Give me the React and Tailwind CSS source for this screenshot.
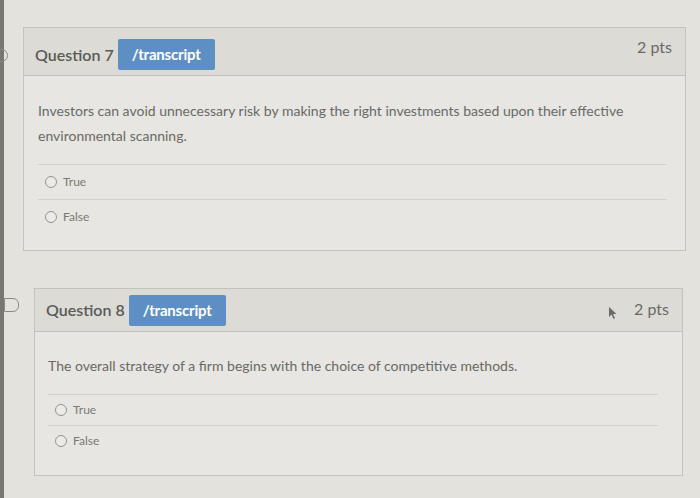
import React from "react";

// a single true/false option with a hollow radio
const Option = ({ label, rowH }) => (
  <div className={`flex items-center gap-[6px] border-t border-[#d2d1cc] ${rowH}`}>
    <span className="w-[12px] h-[12px] rounded-full border border-[#959490] bg-[#ecebe7] ml-[7px]" />
    <span className="text-[12px] text-[#7a7975]">{label}</span>
  </div>
);

const Badge = () => (
  <span className="ml-[4px] inline-flex items-center h-[31px] px-[14px] rounded-[2px] bg-[#5e8fc4] text-white font-bold text-[15px] tracking-[-0.2px]">
    /transcript
  </span>
);

const QuestionCard = ({ number, text, lines, rowH, className, headerH, ptsPos, bodyPad, cursor }) => (
  <div className={`border border-[#c3c2bd] bg-[#e7e6e2] ${className}`}>
    {/* header */}
    <div
      className={`flex items-center justify-between bg-[#dcdbd6] border-b border-[#c3c2bd] pl-[11px] pr-[13px] ${headerH}`}
    >
      <div className="flex items-center">
        <span className="text-[16px] font-semibold text-[#5b5a57]">Question {number}</span>
        <Badge />
      </div>
      <div className="flex items-center gap-[18px]">
        {cursor && (
          <svg width="10" height="14" viewBox="0 0 10 14" className="mt-[6px] mr-[-2px]">
            <path d="M1 1 L1 11 L3.5 8.5 L5.5 13 L7 12.3 L5 8 L8.5 8 Z" fill="#6b6a67" />
          </svg>
        )}
        <span className={`text-[16px] text-[#6a6965] ${ptsPos}`}>2 pts</span>
      </div>
    </div>
    {/* body */}
    <div className={bodyPad}>
      <p className="text-[14px] leading-[25px] text-[#6a6965] max-w-[600px]">
        {text}
      </p>
      <div className={lines}>
        <Option label="True" rowH={rowH} />
        <Option label="False" rowH={rowH} />
      </div>
    </div>
  </div>
);

export default function App() {
  return (
    <div
      className="relative w-[700px] h-[498px] overflow-hidden bg-[#e3e2dd] pt-[27px]"
      style={{ fontFamily: "Lato, 'Liberation Sans', sans-serif" }}
    >
      {/* dark edge of the monitor */}
      <div className="absolute left-0 top-0 w-[4px] h-full bg-[#77766f]" />

      {/* left margin markers */}
      <div className="absolute left-[-5px] top-[49px] w-[13px] h-[13px] rounded-full border-[1.5px] border-[#8a8985]" />
      <div className="absolute left-[4px] top-[298px] w-[15px] h-[14px] border-[1.5px] border-[#8a8985] rounded-r-[6px]" />

      <QuestionCard
        number={7}
        className="ml-[23px] w-[663px] h-[224px]"
        headerH="h-[48px] pt-[6px]"
        ptsPos="mb-[16px]"
        bodyPad="pl-[14px] pr-[18px] pt-[22px]"
        lines="mt-[16px]"
        rowH="h-[35px]"
        text="Investors can avoid unnecessary risk by making the right investments based upon their effective environmental scanning."
      />

      <QuestionCard
        number={8}
        className="ml-[34px] mt-[37px] w-[649px] h-[188px]"
        headerH="h-[43px]"
        ptsPos="mb-[3px]"
        bodyPad="pl-[13px] pr-[24px] pt-[21px]"
        lines="mt-[16px]"
        rowH="h-[31px]"
        cursor
        text="The overall strategy of a firm begins with the choice of competitive methods."
      />
    </div>
  );
}
